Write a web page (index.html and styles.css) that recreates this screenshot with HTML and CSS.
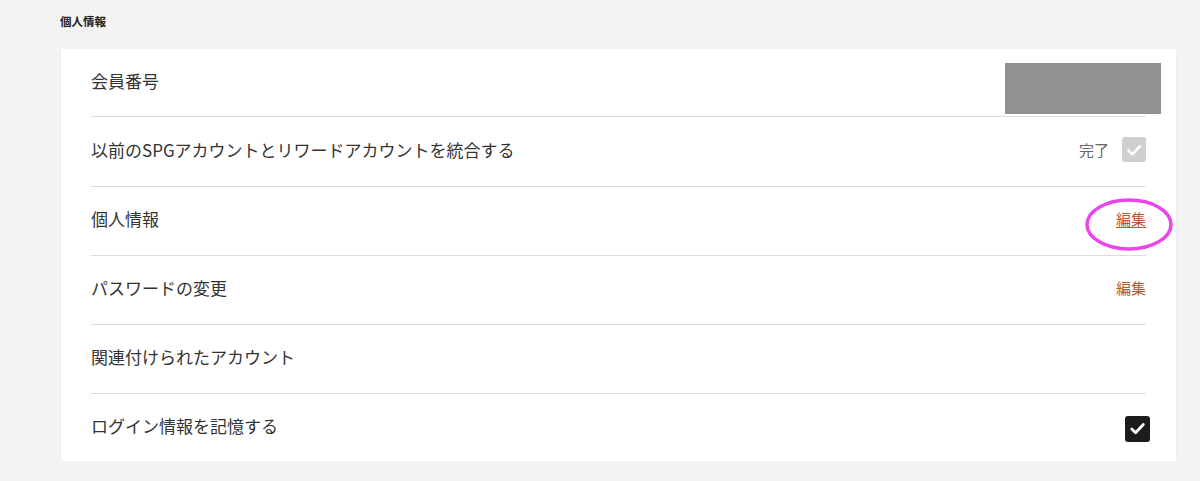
FILE: index.html
```html
<!DOCTYPE html>
<html lang="ja">
<head>
<meta charset="utf-8">
<link rel="stylesheet" href="styles.css">
<title>個人情報</title>
</head>
<body>
<div class="page">
  <h2 class="section-title">個人情報</h2>
  <div class="card">
    <div class="row row-first">
      <span class="label">会員番号</span>
      <span class="redacted"></span>
    </div>
    <div class="row row-second">
      <span class="label">以前のSPGアカウントとリワードアカウントを統合する</span>
      <span class="status">
        <span class="status-text">完了</span>
        <span class="check check-disabled">
          <svg viewBox="0 0 24 24" width="24" height="24"><path d="M6.5 12.5l3.8 3.8 7.5-8" fill="none" stroke="#fff" stroke-width="2.6" stroke-linecap="round" stroke-linejoin="round"/></svg>
        </span>
      </span>
    </div>
    <div class="row">
      <span class="label">個人情報</span>
      <a class="edit edit-underline" href="#">編集
        <svg class="circle-mark" viewBox="0 0 88 53" width="88" height="53"><ellipse cx="44" cy="26.5" rx="42" ry="24.5" fill="none" stroke="#ea45ea" stroke-width="3.5"/></svg>
      </a>
    </div>
    <div class="row">
      <span class="label">パスワードの変更</span>
      <a class="edit" href="#">編集</a>
    </div>
    <div class="row">
      <span class="label">関連付けられたアカウント</span>
    </div>
    <div class="row row-last">
      <span class="label">ログイン情報を記憶する</span>
      <span class="check check-on">
        <svg viewBox="0 0 25 25" width="25" height="25"><path d="M6.8 13l3.8 3.8 7.7-8.3" fill="none" stroke="#fff" stroke-width="2.8" stroke-linecap="round" stroke-linejoin="round"/></svg>
      </span>
    </div>
  </div>
</div>
</body>
</html>
```
FILE: styles.css
```css
html, body {
  margin: 0;
  padding: 0;
  background: #f3f3f3;
}
body {
  font-family: "Noto Sans CJK JP", "Noto Sans", sans-serif;
  color: #333;
}
.page {
  padding: 14px 24px 0 60px;
}
.section-title {
  margin: 0 0 21px 0;
  font-size: 11.5px;
  line-height: 14px;
  font-weight: 700;
  color: #222;
}
.card {
  margin-left: 1px;
  width: 1115px;
  box-sizing: border-box;
  background: #fff;
  padding: 0 30px;
  box-shadow: 0 1px 2px rgba(0, 0, 0, 0.07);
}
.row {
  display: flex;
  align-items: center;
  justify-content: space-between;
  height: 69px;
  box-sizing: border-box;
  padding-bottom: 4px;
  border-bottom: 1px solid #dcdcdc;
}
.row-first {
  height: 68px;
  align-items: stretch;
}
.row-first .label {
  align-self: center;
}
.row-second {
  height: 70px;
}
.row-last {
  height: 67px;
  border-bottom: none;
}
.label {
  font-size: 17px;
  line-height: 22px;
  color: #333;
}
.redacted {
  align-self: flex-end;
  width: 156px;
  height: 51px;
  margin-bottom: -2px;
  margin-right: -15px;
  background: #919191;
}
.status {
  display: flex;
  align-items: center;
  gap: 13px;
}
.status-text {
  font-size: 15px;
  color: #666;
}
.check {
  display: flex;
  align-items: center;
  justify-content: center;
  border-radius: 3px;
}
.check-disabled {
  width: 24px;
  height: 25px;
  background: #cfcfcf;
}
.check-on {
  width: 25px;
  height: 26px;
  margin-right: -4px;
  margin-top: 6px;
  background: #1c1c1c;
}
.edit {
  position: relative;
  font-size: 15px;
  line-height: 20px;
  color: #b5582f;
  text-decoration: none;
}
.edit-underline {
  text-decoration: underline;
  text-underline-offset: 2px;
}
.circle-mark {
  position: absolute;
  left: -31px;
  top: -11px;
  pointer-events: none;
}
```
